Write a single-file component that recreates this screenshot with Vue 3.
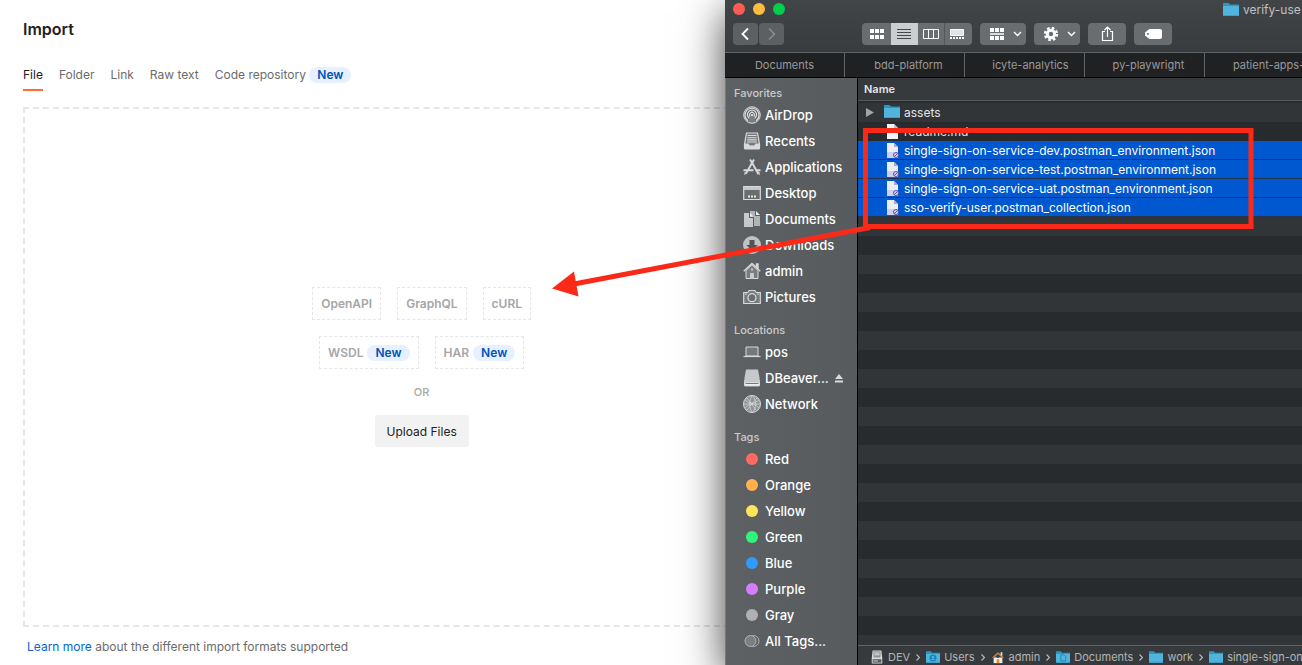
<script setup>
const importTabs = ['File', 'Folder', 'Link', 'Raw text']
const formatRows = [
  [{ name: 'OpenAPI' }, { name: 'GraphQL' }, { name: 'cURL' }],
  [{ name: 'WSDL', fresh: true }, { name: 'HAR', fresh: true }],
]

const icons = {
  airdrop: '<g fill="none" stroke="#d9dadb"><circle cx="9" cy="9" r="8.3" stroke-width="1"/><path d="M5 14.8a7 7 0 1 1 8 0M6.3 12.4a4.6 4.6 0 1 1 5.4 0" stroke-width="1.3"/><path d="M7.3 10.5a2.4 2.4 0 1 1 3.4 0" stroke-width="1.2"/></g><path d="M9 8l5 9H4z" fill="#d9dadb" opacity=".25"/><circle cx="9" cy="9" r="1.1" fill="#e6e6e6"/>',
  recents: '<path d="M3.5 1h11l2 11v4a1 1 0 0 1-1 1h-13a1 1 0 0 1-1-1v-4z" fill="#777b7e" stroke="#d9dadb" stroke-width="1.2"/><path d="M4.5 3.5h9M4.5 5.7h9M4.2 7.9h9.6M4 10h10" stroke="#d9dadb" stroke-width="1.1"/><path d="M1.5 11.5h4l1.2 2h4.600l1.200-2h4V17h-15z" fill="#d9dadb"/>',
  apps: '<g fill="none" stroke="#d9dadb" stroke-width="1.9"><path d="M7 1.500l1.800 2.700 6.700 12M11 1.500L3 15.500M.5 12.200h10M13.500 12.200h4"/></g><path d="M1.500 14l2.300 1.300-2.300 2zM14 15l2.300-1.200.7 3.500z" fill="#d9dadb"/>',
  desktop: '<path d="M.7 2.500h16.600v13H.7z" fill="#696d70" stroke="#d9dadb" stroke-width="1.200"/><path d="M1 3h16v3H1z" fill="#c6c8ca"/><path d="M5 11.500h2v2H5zm3 0h2v2H8zm3 0h2v2h-2z" fill="#e6e6e6"/>',
  documents: '<path d="M1 3h5v5h4v9H1z" fill="#c6c8ca"/><path d="M7 1h5v5h5v10h-6V7H7z" fill="#b1b4b6"/><path d="M7 3l3.500 3.500H7zM13 1l4 4h-4z" fill="#eee"/>',
  downloads: '<circle cx="9" cy="9" r="9" fill="#bfc2c4"/><path d="M6.500 4h5v5h3.200L9 14.500 3.300 9h3.200z" fill="#505456"/>',
  home: '<path d="M3 8.500V16.500h12V8.500L9 2.800z" fill="#797d80" stroke="#d9dadb"/><path d="M.7 9.300L9 1.500l8.300 7.800M13.500 5V2H15v5" fill="none" stroke="#d9dadb" stroke-width="1.400"/><path d="M7 11h4v5.500H7zM8 6.500h2v2H8z" fill="#c6c8ca"/>',
  camera: '<path d="M.7 4.500h4l1.500-2h5.600l1.500 2h4v11H.7z" fill="#777b7e" stroke="#d9dadb" stroke-width="1.200"/><circle cx="9" cy="9.700" r="4" fill="#6a6e71" stroke="#d9dadb" stroke-width="1.300"/><path d="M2 6h2M14 6h2" stroke="#ddd"/>',
  laptop: '<path d="M3 4h12v9H3z" fill="#75797c" stroke="#d9dadb"/><path d="M.5 13.500h17" stroke="#d9dadb" stroke-width="1.200"/>',
  disk: '<path d="M3 .5h12l2 11.500v4a1.500 1.500 0 0 1-1.500 1.500h-13A1.500 1.500 0 0 1 1 16v-4z" fill="#c6c8ca"/><path d="M1.500 13.500h15v3.200h-15z" fill="#eee"/><path d="M2.500 14.500h13" stroke="#777" />',
  network: '<circle cx="9" cy="9" r="8.500" fill="#8f9396" stroke="#d9dadb"/><path d="M2 5c5 4 9 4 14 0M2 13c4-5 10-5 14 0M9 .5c-3 5-3 12 0 17M9 .5c5 4 5 13 0 17M1 9h16M4 3l9 12M14 3L4 15" fill="none" stroke="#d9dadb" stroke-width=".7"/>',
}
const fileDocument = '<path d="M3 1h7l4 4v13H3z" fill="#f4f4f6"/><path d="M10 1l4 4h-4z" fill="#b9bcc4"/>'
const jsonDocument = '<path d="M3 1h7l4 4v11H3z" fill="#eceef3"/><path d="M3 10h11v6H3z" fill="#cfd0f0"/><path d="M10 1l4 4h-4z" fill="#a5adc0"/><circle cx="12" cy="13" r="2.500" fill="#d9d5ef" stroke="#5a54a0"/><path d="M10.500 14.500l3-3" stroke="#5a54a0"/>'
const folderPath = '<path d="M0 1h5.500l1.500 1.500h9V14H0z" fill="#2d96bd"/><path d="M0 4h16v10H0z" fill="#50b4dc"/><path d="M0 13h16v1H0z" fill="#3b9fc8"/>'

const sidebar = [
  {
    title: 'Favorites',
    items: [
      { label: 'AirDrop', icon: icons.airdrop },
      { label: 'Recents', icon: icons.recents },
      { label: 'Applications', icon: icons.apps },
      { label: 'Desktop', icon: icons.desktop },
      { label: 'Documents', icon: icons.documents },
      { label: 'Downloads', icon: icons.downloads },
      { label: 'admin', icon: icons.home },
      { label: 'Pictures', icon: icons.camera },
    ],
  },
  {
    title: 'Locations',
    items: [
      { label: 'pos', icon: icons.laptop },
      { label: 'DBeaver...', icon: icons.disk, eject: true },
      { label: 'Network', icon: icons.network },
    ],
  },
  {
    title: 'Tags',
    items: [
      ['Red', '#ff6961'], ['Orange', '#ffb14c'], ['Yellow', '#ffe45c'], ['Green', '#30f57d'],
      ['Blue', '#2f9bff'], ['Purple', '#d67cff'], ['Gray', '#b0b0b4'],
    ].map(([label, color]) => ({ label, icon: `<circle cx="9" cy="9" r="6" fill="${color}"/>` }))
      .concat({ label: 'All Tags...', icon: '<g stroke="#aeb0b2"><circle cx="10.500" cy="9" r="5.500" fill="none"/><circle cx="7.500" cy="9" r="5.500" fill="#7b7f82"/></g>' }),
  },
]

const folderTabs = ['Documents', 'bdd-platform', 'icyte-analytics', 'py-playwright', 'patient-apps-']
const files = [
  { name: 'assets', icon: folderPath, folder: true },
  { name: 'readme.md', icon: fileDocument },
  { name: 'single-sign-on-service-dev.postman_environment.json', icon: jsonDocument, selected: true },
  { name: 'single-sign-on-service-test.postman_environment.json', icon: jsonDocument, selected: true },
  { name: 'single-sign-on-service-uat.postman_environment.json', icon: jsonDocument, selected: true },
  { name: 'sso-verify-user.postman_collection.json', icon: jsonDocument, selected: true },
]
const crumbs = [
  { name: 'DEV', icon: '<path d="M3 0h10l1 9v6H2V9z" fill="#d8dadc"/><path d="M4 1h8v7H4z" fill="#8b9094"/><path d="M5 3h6M5 5h6" stroke="#eee"/><path d="M3 10h10v4H3z" fill="#5a5e61"/><path d="M4 12h5" stroke="#ddd"/>' },
  { name: 'Users', icon: folderPath + '<circle cx="8" cy="8.500" r="4" fill="#1983bd"/><circle cx="8" cy="7.500" r="1.500" fill="#50b4dc"/><path d="M5.500 11c1-2 4-2 5 0z" fill="#50b4dc"/>' },
  { name: 'admin', icon: '<path d="M3 8h10v6.500H3z" fill="#efeff0"/><path d="M2 8.500L8 3l6 5.500" fill="none" stroke="#b77b4b" stroke-width="2"/><path d="M11 2h2v4h-2z" fill="#ddd"/><path d="M6.500 10h3v4.500h-3z" fill="#f08b24"/><path d="M7 6.500h2v2H7z" fill="#444"/>' },
  { name: 'Documents', icon: folderPath + '<path d="M5.500 5H9l2 2v5H5.500z" fill="none" stroke="#1983bd"/>' },
  { name: 'work', icon: folderPath },
  { name: 'single-sign-on', icon: folderPath },
]
</script>

<template>
  <div class="page">
    <main class="import">
      <h1>Import</h1>
      <nav class="import-tabs">
        <button v-for="(tab, i) in importTabs" :key="tab" type="button" :class="{ active: i === 0 }">{{ tab }}</button>
        <button type="button">Code repository <span class="badge">New</span></button>
      </nav>
      <section class="dropzone">
        <div v-for="(row, i) in formatRows" :key="i" class="formats">
          <span v-for="format in row" :key="format.name" class="format">
            {{ format.name }}<span v-if="format.fresh" class="badge">New</span>
          </span>
        </div>
        <p class="or">OR</p>
        <button type="button" class="upload">Upload Files</button>
      </section>
      <p class="learn"><a href="#">Learn more</a> about the different import formats supported</p>
    </main>

    <section class="finder">
      <header class="titlebar">
        <div class="title-row">
          <button type="button" class="light close" aria-label="Close"></button>
          <button type="button" class="light minimize" aria-label="Minimize"></button>
          <button type="button" class="light maximize" aria-label="Zoom"></button>
          <span class="title"><svg width="16" height="15" viewBox="0 0 16 15" v-html="folderPath"></svg>verify-use</span>
        </div>
        <div class="tools">
          <div class="history">
            <button type="button" aria-label="Back"><svg width="25" height="22"><path d="M15 5.500L9.500 11l5.500 5.500" fill="none" stroke="#fff" stroke-width="1.800" /></svg></button>
            <button type="button" aria-label="Forward"><svg width="25" height="22"><path d="M10 5.500l5.500 5.500-5.500 5.500" fill="none" stroke="#8c8f92" stroke-width="1.500" /></svg></button>
          </div>
          <div class="views">
            <button type="button" aria-label="Icons"><svg width="29" height="22" fill="#fff"><path d="M8 6h4v4H8zm5 0h4v4h-4zm5 0h4v4h-4zM8 12h4v4H8zm5 0h4v4h-4zm5 0h4v4h-4z" /></svg></button>
            <button type="button" class="on" aria-label="List"><svg width="27" height="22" stroke="#44484b"><path d="M6 6.500h14M6 9.500h14M6 12.500h14M6 15.500h14" /></svg></button>
            <button type="button" aria-label="Columns"><svg width="27" height="22" stroke="#fff" fill="none"><path d="M5.500 6.500h15v9h-15zM10.500 6.500v9M15.500 6.500v9" /></svg></button>
            <button type="button" aria-label="Gallery"><svg width="27" height="22" fill="#fff"><path d="M5.500 6.500h13v6h-13z" fill="#dfe2e6" stroke="#fff" /><path d="M5 14h2v2H5zm3 0h2v2H8zm3 0h2v2h-2zm3 0h2v2h-2zm3 0h2v2h-2z" /></svg></button>
          </div>
          <button type="button" class="tool" aria-label="Group"><svg width="46" height="22" fill="#fff"><path d="M10 5h4v4h-4zm5 0h4v4h-4zm5 0h4v4h-4zM10 13h4v4h-4zm5 0h4v4h-4zm5 0h4v4h-4z" /><path d="M10 11h14M34 9l3.500 3.500L41 9" fill="none" stroke="#fff" stroke-width="1.400" /></svg></button>
          <button type="button" class="tool" aria-label="Actions"><svg width="46" height="22"><circle cx="17" cy="11" r="3.700" fill="none" stroke="#fff" stroke-width="3" /><circle cx="17" cy="11" r="6" fill="none" stroke="#fff" stroke-width="2.400" stroke-dasharray="2.600 2.112" /><path d="M34 9l3.500 3.500L41 9" fill="none" stroke="#fff" stroke-width="1.400" /></svg></button>
          <button type="button" class="tool" aria-label="Share"><svg width="38" height="22" fill="none" stroke="#fff" stroke-width="1.200"><path d="M17 8.500h-2.500v9h10v-9H22M19.500 14V4M16.500 7l3-3 3 3" /></svg></button>
          <button type="button" class="tool" aria-label="Tags"><svg width="38" height="22"><path d="M15.500 6H26q2 0 2 2v6q0 2-2 2H15.500L11 12.500v-3z" fill="#fff" /><circle cx="14" cy="11" r="1" fill="#6b6f72" /></svg></button>
        </div>
      </header>

      <nav class="folder-tabs">
        <button v-for="tab in folderTabs" :key="tab" type="button">{{ tab }}</button>
      </nav>

      <div class="body">
        <aside class="sidebar">
          <section v-for="group in sidebar" :key="group.title">
            <h2>{{ group.title }}</h2>
            <a v-for="item in group.items" :key="item.label" href="#">
              <svg width="18" height="18" viewBox="0 0 18 18" v-html="item.icon"></svg>
              <span>{{ item.label }}</span>
              <svg v-if="item.eject" class="eject" width="8" height="9" fill="#d9dadb"><path d="M4 0l4 5H0zM0 6.500h8v2H0z" /></svg>
            </a>
          </section>
        </aside>
        <div class="content">
          <div class="listing">
            <table>
              <thead><tr><th>Name</th></tr></thead>
              <tbody>
                <tr v-for="file in files" :key="file.name" :class="{ selected: file.selected }">
                  <td>
                    <div class="file">
                      <span class="twist"><svg v-if="file.folder" width="8" height="9"><path d="M0 0l8 4.500L0 9z" fill="#a2a4a6" /></svg></span>
                      <svg width="16" height="16" viewBox="0 0 16 16" v-html="file.icon"></svg>
                      <span>{{ file.name }}</span>
                    </div>
                  </td>
                </tr>
              </tbody>
            </table>
          </div>
          <footer class="path">
            <template v-for="(crumb, i) in crumbs" :key="crumb.name">
              <svg v-if="i" class="sep" width="4" height="7"><path d="M.5.5l3 3-3 3" fill="none" stroke="#b9bbbd" stroke-width="1.200" /></svg>
              <svg width="14" height="14" viewBox="0 0 16 15" v-html="crumb.icon"></svg>
              <span>{{ crumb.name }}</span>
            </template>
          </footer>
        </div>
      </div>
    </section>

    <svg class="annotation" width="1302" height="665" aria-hidden="true">
      <path d="M865.500 130.500h385.500v96h-385.500z" fill="none" stroke="#fb2a18" stroke-width="5" />
      <path d="M870 227.500L574 284" stroke="#fb2a18" stroke-width="5" />
      <path d="M552 288.500l22-17 4.500 25z" fill="#fb2a18" />
    </svg>
  </div>
</template>

<style>
body {
  margin: 0;
}
</style>

<style scoped>
.page {
  position: relative;
  height: 100vh;
  overflow: hidden;
  background: #fff;
  font-family: Inter, "Liberation Sans", sans-serif;
}
h1, h2, p {
  margin: 0;
}
button {
  border: 0;
  padding: 0;
  background: none;
  font: inherit;
  color: inherit;
}
a {
  text-decoration: none;
}
svg {
  display: block;
  flex: none;
}

.import {
  box-sizing: border-box;
  display: flex;
  flex-direction: column;
  width: 63%;
  height: 100%;
  padding: 17px 0 8px 23px;
  font-size: 12px;
  color: #6b6b6b;
}
h1 {
  font-size: 16px;
  line-height: 24px;
  font-weight: 600;
  color: #212121;
}
.import-tabs {
  display: flex;
  gap: 16px;
  margin: 18px 0 16px;
}
.import-tabs button {
  height: 32px;
  padding-top: 1px;
  border-bottom: 2px solid transparent;
  line-height: 20px;
}
.import-tabs .active {
  border-color: #ff6c37;
  color: #212121;
}
.badge {
  display: inline-block;
  padding: 0 8px;
  border-radius: 8px;
  background: #e6f0ff;
  line-height: 16px;
  font-weight: 600;
  color: #0053b8;
}
.dropzone {
  flex: 1;
  display: flex;
  flex-direction: column;
  align-items: center;
  justify-content: center;
  border: 2px dashed #e6e6e6;
}
.formats {
  display: flex;
  gap: 16px;
  margin-bottom: 16px;
}
.format {
  display: flex;
  align-items: center;
  gap: 4px;
  height: 31px;
  padding: 0 8px;
  border: 1px dashed #e6e6e6;
  font-weight: 600;
  color: #a6a6a6;
}
.or {
  margin-bottom: 16px;
  font-size: 11px;
  line-height: 14px;
  font-weight: 500;
  color: #a6a6a6;
}
.upload {
  height: 32px;
  padding: 0 12px;
  border-radius: 3px;
  background: #f2f2f2;
  color: #212121;
}
.learn {
  padding: 10px 4px 0;
  line-height: 20px;
}
.learn a {
  color: #0265d2;
}

.finder {
  position: absolute;
  top: 0;
  right: 0;
  bottom: 0;
  left: 725px;
  display: flex;
  flex-direction: column;
  box-shadow: 0 12px 40px rgba(0, 0, 0, 0.75);
  background: #323537;
  font-size: 13px;
  color: #e4e5e6;
  white-space: nowrap;
}
.titlebar {
  height: 52px;
  border-bottom: 1px solid #606466;
  background: linear-gradient(#424547, #393c3e);
  overflow: hidden;
}
.title-row {
  display: flex;
  align-items: center;
  gap: 8px;
  height: 18px;
  margin-bottom: 5px;
  padding-left: 8px;
}
.light {
  flex: none;
  width: 12px;
  height: 12px;
  border-radius: 50%;
}
.close {
  background: #ff5b55;
}
.minimize {
  background: #ffbd3f;
}
.maximize {
  background: #00cf4c;
}
.title {
  display: flex;
  align-items: center;
  gap: 4px;
  margin-left: 430px;
  font-size: 12px;
  color: #bfc0c1;
}
.tools {
  display: flex;
  gap: 8px;
  padding-left: 8px;
}
.history {
  display: flex;
  gap: 1px;
  margin-right: 70px;
}
.history button, .tool, .views {
  border-radius: 4px;
  background: #6a6d70;
}
.history button {
  background: #5d6063;
}
.views {
  display: flex;
  overflow: hidden;
}
.views .on {
  background: #cbced1;
}
.views button:last-child {
  box-shadow: -1px 0 #55585a;
}
.folder-tabs {
  display: flex;
  height: 24px;
  border-bottom: 1px solid #000;
  background: #202123;
  font-size: 11px;
  color: #98999a;
  overflow: hidden;
}
.folder-tabs button {
  flex: none;
  box-sizing: border-box;
  width: 120px;
  padding-left: 8px;
  border-right: 1px solid #606466;
}
.folder-tabs button:first-child {
  padding-left: 0;
}
.folder-tabs button:nth-child(3) {
  padding-left: 12px;
}
.folder-tabs button:last-child {
  flex: 1 0 auto;
  width: auto;
  padding-left: 28px;
  border-right: 0;
  text-align: left;
}
.body {
  flex: 1;
  display: flex;
  min-height: 0;
}
.sidebar {
  box-sizing: border-box;
  flex: none;
  width: 133px;
  padding-top: 6px;
  border-left: 1px solid #777a7c;
  border-right: 1px solid #000;
  background: linear-gradient(90deg, #5e6163, #575b5e);
  overflow: hidden;
}
.sidebar section {
  margin-bottom: 11px;
}
h2 {
  padding-left: 8px;
  font-size: 11px;
  line-height: 18px;
  font-weight: 500;
  color: #c9cbcc;
}
.sidebar a {
  display: flex;
  align-items: center;
  gap: 4px;
  height: 26px;
  padding-left: 17px;
  font-weight: 500;
  color: #fff;
}
.eject {
  margin-left: 2px;
}
.content {
  flex: 1;
  min-width: 0;
  display: flex;
  flex-direction: column;
}
.listing {
  flex: 1;
  min-height: 0;
  overflow: hidden;
  background: repeating-linear-gradient(#323537 0 19px, #282b2d 19px 38px) 0 25px;
}
table {
  width: 100%;
  border-collapse: separate;
  border-spacing: 0;
}
th {
  height: 22px;
  padding: 0 0 0 6px;
  border-bottom: 1px solid #56595b;
  background: #363a3c;
  font-size: 11px;
  line-height: 22px;
  font-weight: 600;
  text-align: left;
}
thead::after {
  content: "";
  display: block;
  height: 2px;
  background: #292c2e;
}
td {
  padding: 0;
}
.file {
  display: flex;
  align-items: center;
  height: 18px;
  padding-left: 8px;
  border-bottom: 1px solid transparent;
  font-size: 12px;
}
.file span:last-child {
  margin-left: 4px;
}
.twist {
  width: 18px;
}
.selected .file {
  border-color: #24344c;
  background: #0058d0;
  background-clip: padding-box;
  color: #fff;
}
.path {
  display: flex;
  align-items: center;
  gap: 4px;
  height: 16px;
  padding: 3px 0 0 12px;
  border-top: 1px solid #606466;
  background: #363a3c;
  font-size: 11px;
  color: #b2b4b5;
  overflow: hidden;
}
.sep {
  margin: 0 2px;
}
.annotation {
  position: absolute;
  top: 0;
  left: 0;
  pointer-events: none;
}
</style>
